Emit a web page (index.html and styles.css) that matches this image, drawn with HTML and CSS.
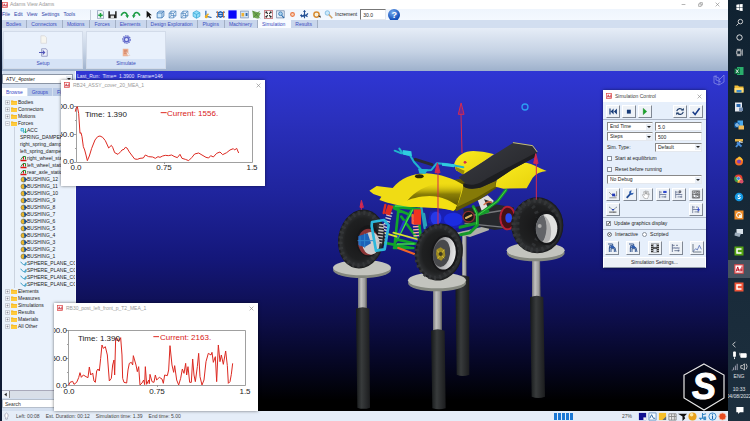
FILE: index.html
```html
<!DOCTYPE html>
<html lang="en">
<head>
<meta charset="utf-8">
<title>Adams View</title>
<link rel="stylesheet" href="styles.css">
</head>
<body>
<svg class="defs" aria-hidden="true">
  <symbol id="ad" viewBox="0 0 12 12"><rect x="1" y="1" width="10" height="10" fill="#fff" stroke="#d44" stroke-width="1.4"/><path d="M2.5 9 4.5 3.5 6.2 9M3.2 7.3h2.3M9.5 3v6M9.3 6.8a1.2 1.2 0 1 0 0 .8" fill="none" stroke="#c01020" stroke-width="1.2"/></symbol>
  <symbol id="folder" viewBox="0 0 12 10"><path d="M0 1h4l1 1h7v8H0z" fill="#f0ae18"/><path d="M0 3h12v7H0z" fill="#ffca3c"/></symbol>
  <symbol id="plus" viewBox="0 0 10 10"><path d="M1 1h8v8H1z" fill="#f4f6fa" stroke="#a2a8b2"/><path d="M3 5h4M5 3v4" stroke="#667" /></symbol>
  <symbol id="minus" viewBox="0 0 10 10"><path d="M1 1h8v8H1z" fill="#f4f6fa" stroke="#a2a8b2"/><path d="M3 5h4" stroke="#667"/></symbol>
  <symbol id="bush" viewBox="0 0 14 12"><circle cx="7" cy="6" r="5" fill="#e8b52c" stroke="#6a5a28"/><path d="M7 1a5 5 0 0 1 0 10 9 9 0 0 0 0-10" fill="#1d5fa8"/><path d="M9 6h5M11 4l3 2-3 2" stroke="#123f84" stroke-width="1.500" fill="none"/></symbol>
  <symbol id="force" viewBox="0 0 14 12"><path d="M1 10h12" stroke="#d81818" stroke-width="3"/><path d="M2 8 6 2h5v6" fill="none" stroke="#2c8a32" stroke-width="2"/><path d="M7 8V3" stroke="#d81818" stroke-width="2"/></symbol>
  <symbol id="contact" viewBox="0 0 14 12"><path d="M1 3c3 0 3 5 6 5s3-2 5-2M12 3v6H8" fill="none" stroke="#1689b8" stroke-width="1.6"/></symbol>
  <symbol id="acc" viewBox="0 0 14 12"><path d="M2 2h5v5H2zM7 6v5" fill="#bfe5f4" stroke="#23a0c8" stroke-width="1.4"/><path d="M11 2v9M9 8l2 3 2-3" stroke="#179858" stroke-width="1.6" fill="none"/></symbol>
  <symbol id="cube" viewBox="0 0 24 24"><path d="M3 8h13v13H3zM3 8l5-5h13l-5 5M21 3v13l-5 5" fill="#cfe8fa" stroke="#3470b0" stroke-width="2"/></symbol>
  <symbol id="wirecube" viewBox="0 0 24 24"><path d="M3 9h12v12H3zM8 3h13v12H8zM3 9l5-6M15 9l6-6M15 21l6-6M3 21l5-6" fill="none" stroke="#4c86bd" stroke-width="2"/></symbol>
  <symbol id="plot" viewBox="0 0 30 30"><path d="M4 3v24M4 7h7M4 15h22M10 23h16M15 7h6M22 20v6" fill="none" stroke="#3d4b70" stroke-width="2"/><path d="M8 12l6 4 6-2 5 6" fill="none" stroke="#6071a8"/></symbol>
  <symbol id="chair" viewBox="0 0 30 30"><path d="M3 3h14v5H8v8M8 14h16l3 13M7 14v13M12 27V17h10v10" fill="none" stroke="#163d80" stroke-width="2.5"/><path d="M10 8h10l3 7H12z" fill="#2e5cae"/></symbol>
</svg>

<div class="desktop">
<div class="app">
  <header class="titlebar">
    <svg class="i6"><use href="#ad"/></svg><span>Adams View Adams</span>
    <div class="winbtns">
      <button aria-label="Minimize"><svg viewBox="0 0 8 8"><path d="M1 4h6"/></svg></button>
      <button aria-label="Restore"><svg viewBox="0 0 8 8"><path d="M1 3h4v4H1zM3 3V1h4v4H5"/></svg></button>
      <button aria-label="Close"><svg viewBox="0 0 8 8"><path d="M1 1l6 6M7 1L1 7"/></svg></button>
    </div>
  </header>

  <div class="toolbar">
    <nav class="menu"><a href="#">File</a><a href="#">Edit</a><a href="#">View</a><a href="#">Settings</a><a href="#">Tools</a></nav>
    <div class="tools">
      <button aria-label="New"><svg viewBox="0 0 24 24"><path d="M4 1h12l4 4v18H4z" fill="#eef3f8" stroke="#8a9ab4" stroke-width="2"/><path d="M12 8v12M6 14h12" stroke="#18a03c" stroke-width="4"/></svg></button>
      <button aria-label="Save"><svg viewBox="0 0 24 24"><path d="M1 3h4v9h14V3h4v19H1z" fill="#222"/><path d="M7 15h9v7H7z" fill="#ddd"/></svg></button>
      <button aria-label="Undo"><svg viewBox="0 0 24 24"><path d="M3 15C7 4 17 3 20 16" fill="none" stroke="#1d9c46" stroke-width="4"/><path d="M14 14h10l-4 8z" fill="#1d9c46"/></svg></button>
      <button aria-label="Redo"><svg viewBox="0 0 24 24"><path d="M21 15C17 4 7 3 4 16" fill="none" stroke="#1d9c46" stroke-width="4"/><path d="M0 14h10l-6 8z" fill="#1d9c46"/></svg></button>
      <button aria-label="Select"><svg viewBox="0 0 24 24"><path d="M7 2v19l5-5 4 7 3-2-4-7h6z" fill="#111"/></svg></button>
      <button aria-label="Front view"><svg><use href="#cube"/></svg></button>
      <button aria-label="Side view"><svg><use href="#wirecube"/></svg></button>
      <button aria-label="Top view"><svg><use href="#wirecube"/></svg></button>
      <button aria-label="Isometric view"><svg viewBox="0 0 24 24"><path d="M12 2l9 5v10l-9 5-9-5V7z" fill="#8fdcf8" stroke="#38a5d6" stroke-width="2"/><path d="M3 7l9 5 9-5M12 12v10" fill="none" stroke="#38a5d6" stroke-width="2"/></svg></button>
      <button aria-label="Axes"><svg viewBox="0 0 24 24"><path d="M5 2v15l15 3" fill="none" stroke="#1959a8" stroke-width="3"/><path d="M5 17l7-7" stroke="#efb020" stroke-width="4"/><circle cx="6" cy="18" r="4" fill="#efb020"/></svg></button>
      <button aria-label="Grid"><svg viewBox="0 0 24 24"><path d="M1 5l5 3 6-3 6 3 5-3M1 19l5-3 6 3 6-3 5 3M4 12h16" fill="none" stroke="#1f62b2" stroke-width="4"/><path d="M4 3v18M20 3v18" stroke="#f07828" stroke-width="2"/></svg></button>
      <button aria-label="Background colour"><svg viewBox="0 0 24 24"><path d="M1 1h22v22H1z" fill="#0808fa"/></svg></button>
      <button aria-label="Copy view"><svg viewBox="0 0 24 24"><path d="M1 3h22v18H1z" fill="#d4e4f5" stroke="#7992b8" stroke-width="2"/><path d="M4 8h7v9H4z" fill="#efb234"/><path d="M15 8h5v8h-5z" fill="#346ba8"/></svg></button>
      <button aria-label="Render mode"><svg viewBox="0 0 24 24"><path d="M1 2l22 6-6 15-14-3z" fill="#72a855"/><path d="M1 2l20 20M20 3L4 20" stroke="#477c38" stroke-width="2"/></svg></button>
      <button aria-label="Fit"><svg viewBox="0 0 24 24"><path d="M1 1h22v22H1z" fill="#fff" stroke="#b34850" stroke-width="2"/><path d="M5 5l5 5M19 5l-5 5M5 19l5-5M19 19l-5-5" stroke="#222" stroke-width="3"/><path d="M4 4h5L4 9zM20 4h-5l5 5zM4 20h5l-5-5zM20 20h-5l5-5z" fill="#222"/></svg></button>
      <button aria-label="Zoom box"><svg viewBox="0 0 24 24"><path d="M1 2h21v19H1z" fill="#e4eef8" stroke="#6b84a5" stroke-width="2"/><circle cx="12" cy="10" r="5" fill="#a8d4f2" stroke="#2568aa" stroke-width="2"/><path d="M15 14l6 7" stroke="#2568aa" stroke-width="3"/></svg></button>
      <button aria-label="Center"><svg viewBox="0 0 24 24"><circle cx="12" cy="12" r="5" fill="#fbd7bd" stroke="#e87440" stroke-width="3"/></svg></button>
      <button aria-label="Translate"><svg viewBox="0 0 24 24"><path d="M12 1v21M2 14c5 4 15 3 19-5M3 19l9-7 8 6" fill="none" stroke="#234f94" stroke-width="3"/><path d="M8 5l4-5 4 5M4 10l-4 5 6 3" fill="#234f94"/></svg></button>
      <button aria-label="Rotate"><svg viewBox="0 0 24 24"><circle cx="12" cy="12" r="7" fill="none" stroke="#d88c32" stroke-width="4"/><path d="M16 15h7v6z" fill="#333"/><path d="M9 9h6v6H9z" fill="#fff0c8"/></svg></button>
      <button aria-label="Zoom"><svg viewBox="0 0 24 24"><circle cx="9" cy="8" r="6" fill="#cae9fb" stroke="#73b2dc" stroke-width="2"/><path d="M13 12l9 10" stroke="#d0a468" stroke-width="4"/></svg></button>
    </div>
    <label for="inc">Increment</label><input id="inc" class="inc" value="30.0">
    <button class="help" aria-label="Help">?</button>
  </div>

  <nav class="tabs"><a href="#">Bodies</a><a href="#">Connectors</a><a href="#">Motions</a><a href="#">Forces</a><a href="#">Elements</a><a href="#">Design Exploration</a><a href="#">Plugins</a><a href="#">Machinery</a><a href="#" class="on">Simulation</a><a href="#">Results</a></nav>

  <section class="ribbon">
    <div class="group"><div class="gicons">
      <svg viewBox="0 0 24 24"><path d="M5 2h10l5 5v15H5z" fill="#f6f5ef" stroke="#d5d5d8" stroke-width="2"/></svg>
      <svg viewBox="0 0 24 24"><path d="M7 2h12l3 4v16H7z" fill="#eef1fa" stroke="#8288b8" stroke-width="2"/><path d="M0 12h14M10 7l5 5-5 5" fill="none" stroke="#5054b8" stroke-width="3"/></svg>
    </div><h2>Setup</h2></div>
    <div class="group"><div class="gicons">
      <svg viewBox="0 0 24 24"><circle cx="12" cy="12" r="10" fill="none" stroke="#5c64c8" stroke-width="3" stroke-dasharray="4 2"/><circle cx="12" cy="12" r="6" fill="#dde2fa" stroke="#5c64c8" stroke-width="4"/></svg>
      <svg viewBox="0 0 24 24"><path d="M2 2h15v20H2z" fill="#eeb294"/><path d="M5 6h9M5 10h9M5 14h7" stroke="#c87458" stroke-width="2"/><path d="M12 9l9 11h-6z" fill="#fff" stroke="#d0aa9b"/></svg>
    </div><h2>Simulate</h2></div>
  </section>

  <main class="work">
    <aside class="side">
      <label class="hide" for="model">Model</label>
      <select id="model" class="model"><option>ATV_4poster</option></select>
      <nav class="ptabs"><a href="#" class="on">Browse</a><a href="#">Groups</a><a href="#">Filters</a></nav>
      <ul class="tree">
        <li><svg class="x"><use href="#plus"/></svg><svg class="f"><use href="#folder"/></svg>Bodies</li>
        <li><svg class="x"><use href="#plus"/></svg><svg class="f"><use href="#folder"/></svg>Connectors</li>
        <li><svg class="x"><use href="#plus"/></svg><svg class="f"><use href="#folder"/></svg>Motions</li>
        <li><svg class="x"><use href="#minus"/></svg><svg class="f"><use href="#folder"/></svg>Forces
          <ul>
            <li><svg><use href="#acc"/></svg>ACC</li>
            <li>SPRING_DAMPER_1</li>
            <li>right_spring_damper</li>
            <li>left_spring_damper</li>
            <li><svg><use href="#force"/></svg>right_wheel_static</li>
            <li><svg><use href="#force"/></svg>left_wheel_static</li>
            <li><svg><use href="#force"/></svg>rear_axle_static</li>
            <li><svg><use href="#bush"/></svg>BUSHING_12</li>
            <li><svg><use href="#bush"/></svg>BUSHING_11</li>
            <li><svg><use href="#bush"/></svg>BUSHING_10</li>
            <li><svg><use href="#bush"/></svg>BUSHING_9</li>
            <li><svg><use href="#bush"/></svg>BUSHING_8</li>
            <li><svg><use href="#bush"/></svg>BUSHING_7</li>
            <li><svg><use href="#bush"/></svg>BUSHING_6</li>
            <li><svg><use href="#bush"/></svg>BUSHING_5</li>
            <li><svg><use href="#bush"/></svg>BUSHING_4</li>
            <li><svg><use href="#bush"/></svg>BUSHING_3</li>
            <li><svg><use href="#bush"/></svg>BUSHING_2</li>
            <li><svg><use href="#bush"/></svg>BUSHING_1</li>
            <li><svg><use href="#contact"/></svg>SPHERE_PLANE_CO</li>
            <li><svg><use href="#contact"/></svg>SPHERE_PLANE_CO</li>
            <li><svg><use href="#contact"/></svg>SPHERE_PLANE_CO</li>
            <li><svg><use href="#contact"/></svg>SPHERE_PLANE_CO</li>
          </ul></li>
        <li><svg class="x"><use href="#plus"/></svg><svg class="f"><use href="#folder"/></svg>Elements</li>
        <li><svg class="x"><use href="#plus"/></svg><svg class="f"><use href="#folder"/></svg>Measures</li>
        <li><svg class="x"><use href="#plus"/></svg><svg class="f"><use href="#folder"/></svg>Simulations</li>
        <li><svg class="x"><use href="#plus"/></svg><svg class="f"><use href="#folder"/></svg>Results</li>
        <li><svg class="x"><use href="#plus"/></svg><svg class="f"><use href="#folder"/></svg>Materials</li>
        <li><svg class="x"><use href="#plus"/></svg><svg class="f"><use href="#folder"/></svg>All Other</li>
      </ul>
      <div class="hscroll"><button aria-label="Scroll left"><svg viewBox="0 0 8 8"><path d="M6 1v6L2 4z" fill="#222"/></svg></button></div>
      <input class="search" aria-label="Search" placeholder="Search">
    </aside>

    <section class="scene" aria-label="Model view">
      <svg class="view3d" viewBox="76 71 652 340" preserveAspectRatio="xMidYMid slice">
        <defs>
          <linearGradient id="metal"><stop offset="0" stop-color="#77777a"/><stop offset=".35" stop-color="#c2c2c0"/><stop offset=".75" stop-color="#9c9c9c"/><stop offset="1" stop-color="#555"/></linearGradient>
          <linearGradient id="dark"><stop offset="0" stop-color="#151819"/><stop offset=".4" stop-color="#383b3c"/><stop offset="1" stop-color="#1b1c1e"/></linearGradient>
          <linearGradient id="shade" x1="0" y1="0" x2="0" y2="1"><stop offset="0" stop-color="#e6d20e" stop-opacity="0"/><stop offset=".5" stop-color="#8a7e06"/><stop offset="1" stop-color="#5c5404"/></linearGradient>
          <linearGradient id="fender" x1="0" y1="0" x2="1" y2="1"><stop offset="0" stop-color="#fbec22"/><stop offset="1" stop-color="#e4cf08"/></linearGradient>
          <linearGradient id="seat" x1="0" y1="0" x2="1" y2="1"><stop offset="0" stop-color="#3a3c42"/><stop offset=".6" stop-color="#2c2d32"/><stop offset="1" stop-color="#16171a"/></linearGradient>
          <linearGradient id="rim"><stop offset="0" stop-color="#5c5c60"/><stop offset=".5" stop-color="#b4b4b6"/><stop offset="1" stop-color="#ececec"/></linearGradient>
          <radialGradient id="tyre"><stop offset="0" stop-color="#161617"/><stop offset=".7" stop-color="#1f2021"/><stop offset=".9" stop-color="#2e3032"/><stop offset="1" stop-color="#161718"/></radialGradient>
        </defs>
        <g transform="translate(330 90) scale(.333333)" stroke-linecap="round" stroke-linejoin="round">
          <!-- four-post rig -->
          <path d="M396 425h14v140h-14z" fill="url(#metal)"/><path d="M376 560q22-9 42 0v294q-20 8-38 0z" fill="url(#dark)"/>
          <path d="M372 430l110-25-6 16-56 20z" fill="#aeb0a9"/>
          <path d="M84 540h27v120H84z" fill="url(#metal)"/><path d="M78 656q20-9 40 0l2 297q-20 7-38 0z" fill="url(#dark)"/>
          <ellipse cx="96" cy="540" rx="87" ry="24" fill="#85887f"/><ellipse cx="96" cy="533" rx="87" ry="23" fill="#c3c4be"/>
          <path d="M309 585h27v140h-27z" fill="url(#metal)"/><path d="M303 722q20-9 41 0l3 233q-20 6-40 0z" fill="url(#dark)"/>
          <ellipse cx="321" cy="579" rx="87" ry="25" fill="#85887f"/><ellipse cx="321" cy="571" rx="87" ry="24" fill="#c3c4be"/>
          <path d="M606 495h24l2 130h-26z" fill="url(#metal)"/><path d="M600 622q20-9 40 0l5 298q-20 8-40 0z" fill="url(#dark)"/>
          <ellipse cx="617" cy="489" rx="87" ry="25" fill="#85887f"/><ellipse cx="617" cy="481" rx="87" ry="24" fill="#c3c4be"/>

          <!-- drive train and rear frame -->
          <path d="M300 365l60-8 35 20 4 30-35 14-70-22z" fill="#1a20b4"/><ellipse cx="370" cy="388" rx="28" ry="20" fill="#1b2ce0"/><ellipse cx="318" cy="385" rx="16" ry="20" fill="#2639e8"/>
          <path d="M400 356l90-14 62 10-8 60-50 8-90-20z" fill="#26282c"/>
          <path d="M405 400l120 12M415 378l110-18" stroke="#77797d" stroke-width="4"/>
          <path d="M443 330l30-14 18 16-6 18-30 12z" fill="#e0dede"/><path d="M462 328l26 8-12 22z" fill="#2a2a2c"/><path d="M462 344q14-14 22-6" fill="none" stroke="#d06a40" stroke-width="4"/>
          <ellipse cx="416" cy="380" rx="17" ry="16" fill="#181818" stroke="#8a2c30" stroke-width="4"/><path d="M408 384l16-8" stroke="#d8b060" stroke-width="6"/>
          <ellipse cx="533" cy="384" rx="22" ry="34" fill="#471016" stroke="#b52036" stroke-width="6" stroke-dasharray="8 4"/><ellipse cx="536" cy="384" rx="10" ry="14" fill="#2848f0"/>
          <path d="M528 300l-26 34-56 40M430 350l12 22v34l-22 22-28 6M446 374l28-10M440 400l-50 12" fill="none" stroke="#149a2a" stroke-width="9"/>
          <path d="M528 300l-26 34-56 40M432 354l8 18v30" fill="none" stroke="#46d048" stroke-width="3"/>

          <!-- front frame and suspension -->
          <path d="M185 350l88 8M192 355l72 30M205 362l-12 112M246 358l-48 96M262 362l12 90M160 458l86 16M192 474h58M200 448l60 14M214 380l44 60" fill="none" stroke="#11a52c" stroke-width="8"/>
          <path d="M196 348h74M248 360l-44 84M202 462h50" fill="none" stroke="#3fe04a" stroke-width="4"/>
          <path d="M222 395l-20 46M232 440l34 12" stroke="#2836c8" stroke-width="7"/>
          <path d="M190 428l80 22M200 440l-40-12" stroke="#dce22c" stroke-width="5"/>
          <path d="M205 474l48 18M112 462l48-10" stroke="#f06428" stroke-width="7"/>
          <path d="M274 352l10 62M282 372l6 34" stroke="#28a0b8" stroke-width="7"/>
          <path d="M180 366l-26 92" stroke="#d4d0d0" stroke-width="17" stroke-dasharray="4 5" stroke-linecap="butt"/>
          <path d="M256 390l3 50" stroke="#ffb4a0" stroke-width="17" stroke-dasharray="4 5" stroke-linecap="butt"/>
          <path d="M182 346l-10 28" stroke="#e02c22" stroke-width="17" stroke-linecap="butt"/><path d="M166 345l-5 24" stroke="#e02c22" stroke-width="7"/>
          <path d="M262 358v46" stroke="#ef3320" stroke-width="22" stroke-linecap="butt"/><path d="M248 375v24" stroke="#ff5b3a" stroke-width="7"/>

          <!-- left front wheel -->
          <ellipse cx="94" cy="447" rx="69" ry="89" transform="rotate(12 94 447)" fill="url(#tyre)"/>
          <ellipse cx="92" cy="447" rx="60" ry="80" transform="rotate(12 92 447)" fill="none" stroke="#343638" stroke-width="13" stroke-dasharray="7 9" stroke-linecap="butt"/>
          <ellipse cx="115" cy="453" rx="36" ry="47" fill="#171719"/><ellipse cx="115" cy="456" rx="31" ry="40" fill="#8b3435"/><ellipse cx="123" cy="460" rx="26" ry="34" fill="#cfcdcd"/>
          <path d="M85 438l28-8 10 30-20 12-18-8z" fill="#1c62b8"/><path d="M90 440v28M104 432v40M84 452h44" stroke="#2f86cc" stroke-width="3"/>
          <path d="M156 402l-8 58" stroke="#c5c1be" stroke-width="16" stroke-dasharray="4 5" stroke-linecap="butt"/>
          <path d="M126 396l36-6 14 16-12 72-26 4-13-74z" fill="none" stroke="#2cb8dc" stroke-width="8"/>

          <!-- rear right wheel -->
          <ellipse cx="622" cy="406" rx="78" ry="84" fill="url(#tyre)"/>
          <ellipse cx="617" cy="406" rx="66" ry="75" fill="none" stroke="#343638" stroke-width="14" stroke-dasharray="8 9" stroke-linecap="butt"/>
          <ellipse cx="594" cy="408" rx="32" ry="66" fill="none" stroke="#2f3133" stroke-width="12" stroke-dasharray="8 10" stroke-linecap="butt"/>
          <ellipse cx="650" cy="414" rx="39" ry="52" fill="#17181a"/><ellipse cx="650" cy="415" rx="32" ry="43" fill="#e2e2e0"/>
          <path d="M640 374c-30 14-30 68-2 82 14-16 20-58 2-82z" fill="#626468"/><path d="M640 374c14 24 12 60-2 82 8 2 14 0 20-4 10-20 8-60-18-78z" fill="#b0b0b0"/><circle cx="629" cy="408" r="6" fill="#aaa"/>

          <!-- bodywork -->
          <path d="M372 223c9-28 32-40 58-40 28 1 48 6 62 10l-88 62-26-14z" fill="url(#fender)"/>
          <path d="M376 230l28 12-4 12-22-14z" fill="#988b06"/>
          <path d="M340 275l60-10 98-6 2 34-48 34-72 36-60-30z" fill="#5e5605"/><path d="M400 288c36 14 66 0 98-26l-2 28-54 32-62 30z" fill="#857a08"/>
          <path d="M118 302l22-14 48 6c25-30 58-43 100-44 45 2 80 16 112 34-2 22-10 38-14 52l-12 24-4 2c-46-12-92-8-136-12-40-4-68-14-86-20l6-10-24-8z" fill="#f0dc14"/>
          <path d="M226 340c18-26 44-46 88-58 34-4 66-6 84 4-4 22-10 40-16 60-20-12-40-24-66-26-30 0-60 10-90 20z" fill="url(#shade)"/>
          <path d="M216 338c30-14 70-24 104-18 24 6 44 18 58 34l-8 8c-46-14-92-8-136-14z" fill="#f3df12"/>
          <path d="M497 290c3-42 28-70 65-74 38-2 64 18 88 27-18 2-32 8-42 20l-18 32-70 1z" fill="url(#fender)"/>
          <path d="M386 262l164-104 56 10 15 18-3 14-70 38-54 36-40 18c-28 8-46 4-54-4l4-10z" fill="url(#seat)"/>
          <path d="M400 280c30 10 50 0 70-14l148-78-4 14-70 38-50 34-40 18c-28 8-46 4-54-4z" fill="#1c1d20"/>
          <path d="M550 158l58 9 13 18" fill="none" stroke="#c8c068" stroke-width="3"/>
          <ellipse cx="268" cy="259" rx="13" ry="6" fill="#2b2708"/>

          <!-- handlebar -->
          <path d="M256 208l50 16" stroke="#2a2a2e" stroke-width="9"/>
          <path d="M194 182l20 8 26-2M208 176l10 14 22 6 12 20 22 24M278 242l26-2 16-20 28 2 52 10" fill="none" stroke="#20b4cc" stroke-width="6"/>
          <path d="M218 180l26 4 2 14-26-4zM336 219l40 4-4 9-36-5z" fill="#30cce0"/><path d="M264 236l30 2-8 14-18-2z" fill="#24b8d0"/>

          <!-- centre front wheel -->
          <ellipse cx="327" cy="486" rx="71" ry="86" transform="rotate(10 327 486)" fill="url(#tyre)"/>
          <ellipse cx="320" cy="486" rx="60" ry="78" transform="rotate(10 320 486)" fill="none" stroke="#343638" stroke-width="13" stroke-dasharray="7 9" stroke-linecap="butt"/>
          <ellipse cx="343" cy="490" rx="40" ry="55" transform="rotate(8 343 490)" fill="#161618"/><ellipse cx="343" cy="490" rx="34" ry="49" transform="rotate(8 343 490)" fill="url(#rim)"/><ellipse cx="335" cy="490" rx="25" ry="41" transform="rotate(8 335 490)" fill="#48494c"/>
          <path d="M320 478l12-6 12 8 2 18-12 14-12-6-4-14z" fill="#a08c22"/><path d="M322 482l20 22M342 480l-18 24" stroke="#d4bc34" stroke-width="3"/><circle cx="332" cy="492" r="6" fill="#3f3a20"/>

          <!-- force arrows and cursor -->
          <g stroke="#d42a50" stroke-width="3" fill="#d42a50"><path d="M396 188l-3-115" fill="none"/><path d="M393 40l-8 33h16z" fill="#6c2898"/><path d="M324 402V245M619 328V218M94 358v-12" fill="none"/><path d="M322 220l-7 28h14zM617 192l-6 28h12zM94 332l-4 20h9z"/><circle cx="405" cy="217" r="3"/></g>
          <circle cx="585" cy="51" r="9" fill="none" stroke="#2c9cf2" stroke-width="4"/>
        </g>
        <path d="M714 76l5 2v7l-5-2zM719 80l5-5v7l-5 3M716 75v5l5 2" fill="none" stroke="#8c94e8" stroke-width=".7"/>
      </svg>
      <p class="run">Last_Run:&nbsp; Time=&nbsp; 1.3900&nbsp; Frame=146</p>
    </section>

    <section class="win w1">
      <header><svg class="i6"><use href="#ad"/></svg><span>RB24_ASSY_cover_20_MEA_1</span><button aria-label="Close"><svg viewBox="0 0 8 8"><path d="M1 1l6 6M7 1L1 7"/></svg></button></header>
      <svg class="chart" viewBox="61 90 204 96">
        <path class="axis" d="M76 106.500h176.500v56H76.500v-56M74 106.500h2M75 120.500h1M74 134.500h2M75 148.500h1M74 162.500h2M164.500 162v2"/>
        <g transform="translate(0 70) scale(.333333)"><path class="curve" d="M226 125L228 115 232 110 236 130 240 190 243 188 246 200 250 230 254 240 258 255 262 272 268 258 275 235 285 210 293 200 300 198 308 202 316 212 322 225 326 234 334 226 338 232 344 248 354 253 362 245 366 240 372 238 376 232 381 234 388 246 397 258 404 267 412 268 420 265 430 264 436 255 446 260 458 261 466 265 474 260 480 262 488 258 496 256 505 257 515 255 522 259 532 263 540 253 546 265 556 268 566 272 576 262 584 252 596 249 606 255 618 262 626 264 632 257 640 261 650 250 660 246 668 254 680 248 690 240 700 236 704 240 710 235 716 249M482 128h18"/></g>
        <text x="74" y="109" text-anchor="end">100.0</text><text x="74" y="137" text-anchor="end">50.0</text><text x="74" y="164" text-anchor="end">0.0</text>
        <text x="76" y="170" text-anchor="middle">0.0</text><text x="164" y="170" text-anchor="middle">0.75</text><text x="252" y="170" text-anchor="middle">1.5</text>
        <text x="85" y="117">Time: 1.390</text><text x="167" y="116" class="red">Current: 1556.</text>
      </svg>
    </section>

    <section class="win w2">
      <header><svg class="i6"><use href="#ad"/></svg><span>RB30_post_left_front_p_T2_MEA_1</span><button aria-label="Close"><svg viewBox="0 0 8 8"><path d="M1 1l6 6M7 1L1 7"/></svg></button></header>
      <svg class="chart" viewBox="54 313 204 98">
        <path class="axis" d="M68 330.500h177.500v55H68.500v-55M66 330.500h2M67 344.500h1M66 358.500h2M67 372.500h1M66 385.500h2M157.500 385v2"/>
        <g transform="translate(50 295) scale(.333333)"><path class="curve" d="M56 271L60 262 68 259 72 268 80 262 86 248 90 233 94 247 100 240 108 245 114 248 118 216 122 240 128 234 132 258 136 262 140 228 144 222 148 228 152 190 156 150 160 160 166 155 172 180 178 258 184 250 188 210 192 195 194 240 197 130 200 128 206 140 212 128 216 180 218 250 222 262 230 264 234 225 238 205 244 202 248 210 250 182 258 210 262 230 266 215 270 270 276 264 281 255 284 269 286 215 290 268 296 255 298 266 300 238 306 260 312 262 316 240 320 255 328 247 336 252 340 265 344 240 352 242 356 225 360 152 366 210 371 232 374 212 380 255 386 270 392 250 397 222 402 235 407 205 410 240 414 215 419 262 424 262 428 192 432 240 436 260 442 215 446 175 450 245 456 270 462 255 468 200 475 175 483 180 486 172 490 202 496 185 500 260 505 150 510 200 514 180 520 208 527 168 532 212 535 265 540 260 544 238 548 205M310 125h17"/></g>
        <text x="67" y="333" text-anchor="end">100.0</text><text x="67" y="361" text-anchor="end">50.0</text><text x="67" y="388" text-anchor="end">0.0</text>
        <text x="69" y="394" text-anchor="middle">0.0</text><text x="157" y="394" text-anchor="middle">0.75</text><text x="245" y="394" text-anchor="middle">1.5</text>
        <text x="78" y="341">Time: 1.390</text><text x="160" y="340" class="red">Current: 2163.</text>
      </svg>
    </section>

    <section class="win sim">
      <header><svg class="i6"><use href="#ad"/></svg><span>Simulation Control</span><button aria-label="Close"><svg viewBox="0 0 8 8"><path d="M1 1l6 6M7 1L1 7"/></svg></button></header>
      <div class="play">
        <button aria-label="Rewind"><svg viewBox="0 0 30 30"><path d="M3 5h4v20H3zM17 5v20L7 15zM28 5v20L18 15z" fill="#173b78"/></svg></button>
        <button aria-label="Stop"><svg viewBox="0 0 30 30"><path d="M8 9h13v13H8z" fill="#173b78"/></svg></button>
        <button aria-label="Start"><svg viewBox="0 0 30 30"><path d="M9 4l12 11L9 26z" fill="#18a428" stroke="#12701c"/></svg></button>
        <span class="grow"></span>
        <button aria-label="Reset"><svg viewBox="0 0 30 30"><path d="M4 14C7 4 18 3 24 10M26 16C23 26 12 27 6 20" fill="none" stroke="#25426f" stroke-width="4"/><path d="M18 12h10V3zM12 18H2v9z" fill="#25426f"/></svg></button>
        <button aria-label="Verify"><svg viewBox="0 0 30 30"><path d="M4 16l8 9L27 4" fill="none" stroke="#173b88" stroke-width="5"/></svg></button>
      </div>
      <div class="form">
        <select aria-label="End mode"><option>End Time</option></select><input aria-label="End time" value="5.0">
        <select aria-label="Step mode"><option>Steps</option></select><input aria-label="Steps" value="500">
        <label for="type">Sim. Type:</label><select id="type"><option>Default</option></select>
        <label class="wide"><input type="checkbox">Start at equilibrium</label>
        <label class="wide"><input type="checkbox">Reset before running</label>
        <select class="wide" aria-label="Debug"><option>No Debug</option></select>
      </div>
      <div class="icons">
        <button aria-label="Component"><svg viewBox="0 0 30 30"><path d="M2 7l8 8h4M27 4v16h-8M3 26h24" fill="none" stroke="#555" stroke-width="2"/><path d="M12 12h10v9H12z" fill="#2238b8"/></svg></button>
        <button aria-label="Settings"><svg viewBox="0 0 30 30"><path d="M4 26L17 12" stroke="#1f4b94" stroke-width="6"/><path d="M27 9l-6 2-3-3 3-6c-8-1-11 6-7 11s12 4 13-4" fill="#2b5cae"/></svg></button>
        <button aria-label="Pan"><svg viewBox="0 0 30 30"><path d="M9 27L3 16l3-2 4 4L7 6l3-1 4 9-1-11h3l1 11 3-10 3 1-2 12 3-5 2 1-4 11-3 6z" fill="#fff" stroke="#777" stroke-width="1.500"/></svg></button>
        <button aria-label="Strip chart"><svg viewBox="0 0 30 30"><use href="#plot" width="30" height="30"/><path d="M16 3h11v7H16z" fill="#3048d0"/></svg></button>
        <button aria-label="Plot point"><svg viewBox="0 0 30 30"><use href="#plot" width="30" height="30"/><path d="M15 12V3h6v5h-5" fill="none" stroke="#223" stroke-width="2"/></svg></button>
        <button aria-label="Tables"><svg viewBox="0 0 30 30"><path d="M3 3h24v24H3zM3 15h24M15 3v24M6 12l3-7 3 7M18 5v7h5V5zM6 18v7h6M18 18h6v7h-6" fill="none" stroke="#3b3b3b" stroke-width="2"/></svg></button>
        <button aria-label="Contact"><svg viewBox="0 0 30 30"><path d="M2 7c5 0 8 9 13 9s8-9 13-9" fill="none" stroke="#345" stroke-width="2"/><path d="M10 13h10l-5 7z" fill="#2442b0"/><path d="M3 24h24" stroke="#444" stroke-width="4" stroke-dasharray="3 1"/></svg></button>
        <button class="last" aria-label="Linear"><svg viewBox="0 0 30 30"><use href="#plot" width="30" height="30"/><path d="M23 8v12M18 16h10" stroke="#2f4ad8" stroke-width="3"/></svg></button>
      </div>
      <div class="opts">
        <label><input type="checkbox" checked>Update graphics display</label>
      </div>
      <div class="opts radios">
        <label><input type="radio" name="mode" checked>Interactive</label><label><input type="radio" name="mode">Scripted</label>
      </div>
      <div class="modes">
        <button aria-label="Model"><svg><use href="#chair"/></svg></button>
        <button aria-label="Revert"><svg><use href="#chair"/></svg></button>
        <button aria-label="Animation"><svg viewBox="0 0 30 30"><path d="M3 2h24v26H3z" fill="#333"/><path d="M10 3h10v10H10zM10 17h10v10H10z" fill="#dfe5ee"/><path d="M6 3v25M24 3v25" stroke="#fff" stroke-width="3" stroke-dasharray="3 3"/></svg></button>
        <button aria-label="Plots"><svg><use href="#plot"/></svg></button>
        <button aria-label="Postprocessor"><svg viewBox="0 0 30 30"><path d="M3 3v24h25" fill="none" stroke="#345" stroke-width="2"/><path d="M4 25l7-8 5 4 6-14 6 12" fill="none" stroke="#3554a8" stroke-width="2"/></svg></button>
      </div>
      <button class="settings">Simulation Settings...</button>
    </section>

    <div class="logo"><svg viewBox="0 0 44 50"><path d="M22 2l20 11v23L22 48 2 36V13z" fill="#02030a" fill-opacity=".5" stroke="#e8e8e8" stroke-width="1.200"/><text x="22" y="37" text-anchor="middle">S</text></svg></div>
  </main>

  <footer class="status">
    <svg class="bulb" viewBox="0 0 8 10"><path d="M4 1a3 3 0 0 0-1 5v2h2V6a3 3 0 0 0-1-5" fill="#fff" stroke="#aab"/></svg>
    <span>Left: 00:08</span><span>Est. Duration: 00:12</span><span>Simulation time: 1.39</span><span>End time: 5.00</span>
    <div class="bars"><i></i><i></i><i></i><i></i><i></i></div>
    <span class="pct">27%</span>
    <div class="sicons">
      <svg viewBox="0 0 10 10"><path d="M1 1h8v8H1z" fill="#101090"/><path d="M6 6h3v3H6z" fill="#eee"/></svg>
      <svg viewBox="0 0 10 10"><path d="M1 1h8v8H1z" fill="#f5fbff" stroke="#6a96c4"/><path d="M2 7l2-4 2 4h2" fill="none" stroke="#26639e"/></svg>
      <svg viewBox="0 0 10 10"><path d="M1 1h8v8H1z" fill="#f6bf28"/><path d="M5 9l4-4v4z" fill="#5b6a7c"/></svg>
      <svg viewBox="0 0 10 10"><path d="M1 2h8v7H1zM1 5h8M4 2v7M7 2v7" fill="#eee" stroke="#888"/></svg>
      <svg viewBox="0 0 10 10"><path d="M0 2h10L7 5l1 2-3 3V5z" fill="#111"/></svg>
      <svg viewBox="0 0 10 10"><circle cx="5" cy="5" r="4.500" fill="#e9a21c"/><circle cx="4" cy="3" r="2" fill="#fde9a6"/></svg>
      <svg viewBox="0 0 10 10"><path d="M1 7h8M5 1v6M5 3l4-1M3 9V7" stroke="#3184c4" stroke-width="1.200"/><path d="M6 5h3v4H6z" fill="#3f8cc8"/></svg>
      <svg viewBox="0 0 10 10"><circle cx="5" cy="5" r="4" fill="#dceffc" stroke="#2f83c8"/><path d="M5 4v4M5 2v1" stroke="#1864b0" stroke-width="1.200"/></svg>
      <svg viewBox="0 0 10 10"><circle cx="5" cy="5" r="4" fill="#e64b20" stroke="#f8c4b4"/></svg>
    </div>
  </footer>
</div>

<nav class="taskbar">
  <div class="sys">
    <svg viewBox="0 0 20 20"><path d="M3 4l6-1v6H3zM10 3l7-1v7h-7zM3 10h6v6l-6-1zM10 10h7v8l-7-1z" fill="#fff"/></svg>
    <svg viewBox="0 0 20 20"><circle cx="12" cy="8" r="5" fill="none" stroke="#ddd" stroke-width="2"/><path d="M8 12l-5 5" stroke="#ddd" stroke-width="2"/></svg>
    <svg viewBox="0 0 20 20"><circle cx="10" cy="10" r="6" fill="none" stroke="#eee" stroke-width="2"/></svg>
    <svg viewBox="0 0 20 20"><path d="M4 6h9v8H4zM4 3h9M4 17h9M16 3v14" fill="none" stroke="#ddd" stroke-width="2"/></svg>
  </div>
  <div class="apps">
    <a href="#" aria-label="Excel"><svg viewBox="0 0 20 20"><path d="M6 2h13v16H6z" fill="#2aae6c"/><path d="M1 5h11v11H1z" fill="#0d7240"/><path d="M4 7l5 7M9 7l-5 7" stroke="#fff" stroke-width="1.600"/></svg></a>
    <a href="#" aria-label="Explorer"><svg viewBox="0 0 20 20"><path d="M1 3h7l2 2h9v12H1z" fill="#f2be38"/><path d="M1 8h18v9H1z" fill="#ffdc74"/><path d="M5 12h10v5H5z" fill="#3b8cce"/></svg></a>
    <a href="#" aria-label="Computer"><svg viewBox="0 0 20 20"><path d="M2 1h14v18H2z" fill="#e4e8f0"/><path d="M5 4h8v6H5z" fill="#2868b0"/><path d="M10 11h8v7h-8z" fill="#7790b4"/></svg></a>
    <a href="#" aria-label="Outlook"><svg viewBox="0 0 20 20"><path d="M7 1h11v11H7z" fill="#48a8ec"/><path d="M1 5h10v10H1z" fill="#0c66b8"/><circle cx="6" cy="10" r="2.500" fill="none" stroke="#fff" stroke-width="1.500"/><path d="M9 11h11v8H9z" fill="#f2bb58"/></svg></a>
    <a href="#" aria-label="Solver"><svg viewBox="0 0 20 20"><path d="M2 2h16v5H2z" fill="#e9b64c"/><path d="M4 18l8-10M6 9l9 8" stroke="#4a8fdb" stroke-width="4"/><path d="M10 7l7 2" stroke="#fff" stroke-width="2"/></svg></a>
    <a href="#" aria-label="Firefox"><svg viewBox="0 0 20 20"><circle cx="10" cy="11" r="8" fill="#f36b24"/><path d="M2 9q5-4 8-8 6 1 8 9-4-3-8-2z" fill="#fdc232"/><circle cx="10" cy="11" r="4" fill="#7d42b8"/></svg></a>
    <a href="#" aria-label="Chrome"><svg viewBox="0 0 20 20"><circle cx="9" cy="9" r="8" fill="#e33e30"/><path d="M9 9L2 5a8 8 0 0 0 5 12z" fill="#31a24c"/><path d="M9 9l8 1a8 8 0 0 1-10 7z" fill="#f4c430"/><circle cx="9" cy="9" r="3.500" fill="#3f7de0" stroke="#fff"/><circle cx="15" cy="15" r="4" fill="#d85068"/></svg></a>
    <a href="#" aria-label="Skype"><svg viewBox="0 0 20 20"><circle cx="10" cy="10" r="8.500" fill="#1599e2"/><path d="M13 7q-3-2-5 0c-1 3 5 2 5 5q-3 3-6 0" fill="none" stroke="#fff" stroke-width="2"/></svg></a>
    <a href="#" aria-label="Viewer"><svg viewBox="0 0 20 20"><path d="M1 1h18v18H1z" fill="#ef8c28"/><circle cx="10" cy="10" r="5" fill="none" stroke="#fff" stroke-width="2"/><path d="M10 10h6v6h-6z" fill="#fff4dc"/></svg></a>
    <a href="#" aria-label="Notes"><svg viewBox="0 0 20 20"><path d="M5 2h13v10H5z" fill="#d8e2ea"/><path d="M2 9l12 2-3 7-10-3z" fill="#9eafbe"/></svg></a>
    <a href="#" aria-label="Camtasia"><svg viewBox="0 0 20 20"><path d="M1 1h18v18H1z" fill="#55a514"/><path d="M15 6H6v8h9" fill="none" stroke="#fff" stroke-width="3"/></svg></a>
    <a href="#" class="on" aria-label="Adams"><svg viewBox="0 0 12 12"><use href="#ad"/></svg></a>
    <a href="#" aria-label="Recorder"><svg viewBox="0 0 20 20"><path d="M1 1h18v18H1z" fill="#f05538"/><path d="M15 6H6v8h9" fill="none" stroke="#fff" stroke-width="3"/></svg></a>
  </div>
  <div class="tray">
    <svg viewBox="0 0 20 10"><path d="M6 2L3 5l3 3" fill="none" stroke="#ddd"/></svg>
    <svg viewBox="0 0 20 10"><path d="M4 1h2v5H4zM5 7v2" fill="#fff" stroke="#fff"/><path d="M12 3h6v4h-6zM11 2v3" fill="#fff" stroke="#fff"/></svg>
    <svg viewBox="0 0 20 10"><path d="M2 9h1M4 9V6M6 9V4M8 9V2" stroke="#aab" stroke-width="1"/><path d="M12 4h2l2-2v7l-2-2h-2zM18 2q2 3 0 6" fill="none" stroke="#ccc"/></svg>
    <span>ENG</span>
    <time>10:33<br>04/08/2022</time>
    <svg viewBox="0 0 20 10"><path d="M7 1h8v6h-4l-2 2V7H7z" fill="#fff"/></svg>
  </div>
</nav>
</div>
</body>
</html>
```
FILE: styles.css
```css
* { box-sizing: border-box; }
body { margin: 0; font: 5px/7px "Liberation Sans", Arial, sans-serif; color: #222; background: #0e1a33; overflow: hidden; }
button, input, select { font: inherit; color: inherit; margin: 0; padding: 0; border: 0; background: none; border-radius: 0; appearance: none; min-width: 0; }
a { color: inherit; text-decoration: none; }
h2, p, ul { margin: 0; padding: 0; font: inherit; list-style: none; }
svg { display: block; }
.defs { position: absolute; width: 0; height: 0; }
.hide { position: absolute; width: 1px; height: 1px; overflow: hidden; clip-path: inset(50%); }
.i6 { width: 6px; height: 6px; flex: none; }

.desktop { display: grid; grid-template-columns: minmax(0, 1fr) 22px; min-height: 100vh; padding-left: 2px; }
.app { display: flex; flex-direction: column; background: #fff; min-width: 0; }

.titlebar { display: flex; align-items: center; gap: 2px; height: 9px; color: #999; }
.winbtns { display: flex; gap: 12px; margin-left: auto; padding-right: 8px; }
.winbtns svg, .win header button svg { width: 5px; height: 5px; fill: none; stroke: #888; }

.toolbar { display: flex; align-items: center; height: 11px; background: linear-gradient(#eff5fd, #f4f9ff); }
.menu { display: flex; gap: 4px; width: 89px; height: 10px; border-right: 1px solid #c4ccd8; line-height: 9px; color: #2f43a8; }
.tools { display: flex; gap: 3px; padding: 0 2px 0 5px; }
.tools svg { width: 9px; height: 9px; }
.inc { width: 26px; height: 11px; margin-left: 3px; padding-left: 2px; background: #fff; border: 1px solid #e4e8ee; border-top-color: #777; border-left-color: #777; }
.help { width: 12px; height: 12px; margin-left: 2px; border-radius: 50%; background: radial-gradient(circle at 40% 30%, #79aef0, #1550ba 65%); color: #fff; font-size: 9px; font-weight: bold; line-height: 12px; }

.tabs { display: flex; height: 8px; background: #d2def0; color: #3a4cc0; line-height: 9px; }
.tabs a { padding: 0 5px 0 4px; border-right: 1px solid #a2afc4; background: #c9d6ec; white-space: nowrap; }
.tabs .on { background: #f8fbff; border-color: #f8fbff; }

.ribbon { display: flex; gap: 3px; height: 43px; padding: 3px 1px 2px; background: linear-gradient(#e6edf7, #c5d2e4 55%, #9eb1cc); }
.group { display: flex; flex-direction: column; width: 80px; border: 1px solid #d2dbe9; background: #e9f1fc; }
.gicons { flex: 1; display: flex; flex-direction: column; align-items: center; justify-content: center; gap: 4px; }
.gicons svg { width: 9px; height: 9px; }
.group h2 { background: #d6e3f6; text-align: center; line-height: 9px; color: #3a4cb8; }

.work { flex: 1; display: flex; position: relative; min-height: 0; }
.side { display: flex; flex-direction: column; width: 74px; flex: none; background: #d4dfef; border-right: 1px solid #f6f9fd; overflow: hidden; }
select { background: #fff url("data:image/svg+xml,%3Csvg xmlns='http://www.w3.org/2000/svg' viewBox='0 0 6 6'%3E%3Cpath d='M0 0h6v6H0z' fill='%23e9eef5'/%3E%3Cpath d='M1 2h4L3 4z' fill='%23222'/%3E%3C/svg%3E") right center / 6px 6px no-repeat; border: 1px solid #e4e8ee; border-top-color: #888; border-left-color: #888; padding-left: 2px; height: 9px; line-height: 7px; }
.model { height: 10px; margin: 3px 2px 4px 0; border-color: #8b95a5; padding-left: 3px; }
.ptabs { display: flex; gap: 1px; height: 8px; color: #3346c8; line-height: 8px; }
.ptabs a { padding: 0 4px; background: #b9cae6; white-space: nowrap; }
.ptabs .on { background: #fff; }
.tree { flex: 1; padding: 3px 0 0 3px; background: #eaf2fc; white-space: nowrap; overflow: hidden; }
.tree svg { display: inline-block; vertical-align: top; width: 7px; height: 7px; }
.tree .x { width: 5px; height: 5px; margin: 1px 1px 0 0; }
.tree .f { width: 6px; height: 5px; margin: 1px 1px 0 0; }
.tree ul { margin-left: 9px; padding-left: 5px; border-left: 1px solid #cbd3df; }
.hscroll { height: 8px; background: #d9dfe8; margin-right: 2px; border-top: 1px solid #aab; }
.hscroll button { width: 8px; height: 7px; padding: 1px; background: #eef2f8; border-right: 1px solid #888; }
.hscroll svg { width: 5px; height: 5px; }
.search { height: 9px; margin: 1px 0 3px; padding-left: 2px; background: #fff; border: 1px solid #b6bfcc; }
.search::placeholder { color: #333; opacity: 1; }

.scene { flex: 1; position: relative; min-width: 0; overflow: hidden; background: linear-gradient(#2f36d4, #2a30bd 14%, #1f249c 36%, #14177a 55%, #0d0e4a 73%, #050620 87%, #000 97%); }
.view3d { position: absolute; width: 100%; height: 100%; }
.run { position: relative; padding: 2px 1px; color: #e4e6ff; }

.win { position: absolute; background: #fff; box-shadow: 0 0 3px #0008; }
.win header { display: flex; align-items: center; gap: 3px; height: 10px; padding: 0 4px 0 3px; color: #999; white-space: nowrap; }
.win header button { margin-left: auto; }
.w1 { left: 59px; top: 9px; width: 204px; }
.w2 { left: 52px; top: 232px; width: 204px; }
.chart { width: 100%; font-size: 8px; fill: #222; }
.axis { fill: none; stroke: #888; stroke-width: .8; }
.curve { fill: none; stroke: #dc2820; stroke-width: 3; stroke-linejoin: round; }
.red { fill: #d82020; }

.sim { right: 22px; top: 19px; width: 103px; background: #e6effb; }
.sim header { height: 12px; background: #fff; color: #444; }
.play { display: flex; gap: 2px; padding: 3px 3px 1px; border-bottom: 1px solid #aeb8c8; }
.grow { flex: 1; }
.sim .play button, .icons button, .modes button { height: 13px; padding: 1px; background: #eef2f7; border: 1px solid #fff; border-right-color: #808894; border-bottom-color: #808894; }
.play button { width: 14px; }
.play svg, .icons svg, .modes svg { width: 100%; height: 100%; }
.form { display: grid; grid-template-columns: 46px 1fr; gap: 1px 2px; padding: 2px 4px 3px; align-items: center; }
.form > input { width: 100%; height: 9px; background: #fff; border: 1px solid #e4e8ee; border-top-color: #888; border-left-color: #888; padding-left: 2px; }
.form label { height: 10px; line-height: 10px; }
.wide { grid-column: 1 / -1; }
label input[type] { width: 5px; height: 5px; margin: 0 3px 0 0; background: #fff; border: 1px solid #8a929e; vertical-align: -1px; }
label input[type=radio] { border-radius: 50%; }
input[type]:checked { background: #222; box-shadow: inset 0 0 0 1px #fff; }
label input[type=checkbox]:checked { box-shadow: none; background: #fff url("data:image/svg+xml,%3Csvg xmlns='http://www.w3.org/2000/svg' viewBox='0 0 6 6'%3E%3Cpath d='M0 3l2 2 4-5' fill='none' stroke='%23111' stroke-width='1.6'/%3E%3C/svg%3E") center / 100% no-repeat; }
.icons { display: grid; grid-template-columns: repeat(6, 14px); justify-content: space-between; gap: 2px 1px; padding: 1px 3px; border-bottom: 1px solid #aeb8c8; }
.icons button { height: 13px; }
.icons .last { grid-column: 6; }
.opts { padding: 2px 3px; border-bottom: 1px solid #aeb8c8; }
.radios { display: flex; gap: 4px; padding: 1px 4px; border: 0; }
.modes { display: flex; justify-content: space-between; padding: 2px 2px 2px; }
.modes button { width: 14px; height: 14px; }
.settings { width: 100%; height: 11px; background: #edf1f7; border: 1px solid #fff; border-bottom-color: #909aa8; }

.logo { position: absolute; right: 2px; bottom: -1px; width: 44px; }
.logo text { font: italic bold 36px "Liberation Sans", Arial, sans-serif; fill: #fff; stroke: #fff; stroke-width: 1px; }

.status { display: flex; align-items: center; gap: 6px; height: 10px; padding: 0 1px; background: #e5edf8; color: #444; white-space: nowrap; }
.bulb { width: 7px; height: 9px; }
.bars { display: flex; gap: 1px; width: 62px; height: 7px; margin-left: auto; }
.bars i { width: 3px; background: #1c78d4; }
.sicons { display: flex; gap: 1px; }
.sicons svg { width: 9px; height: 9px; }

.taskbar { display: flex; flex-direction: column; background: linear-gradient(#102231, #1d2f3e); color: #e0e4e8; overflow: hidden; }
.sys { display: flex; flex-direction: column; align-items: center; gap: 6px; padding-top: 3px; }
.sys svg { width: 9px; height: 9px; }
.apps a { display: flex; align-items: center; justify-content: center; height: 18px; }
.apps { padding-top: 5px; }
.apps svg { width: 10px; height: 10px; }
.apps .on { background: #44525f; }
.tray { display: flex; flex-direction: column; align-items: center; gap: 2px; margin-top: auto; padding-bottom: 6px; text-align: center; }
.tray svg { width: 18px; height: 9px; }
.tray time { margin: 4px 0; white-space: nowrap; }
.tray span { line-height: 7px; }
```
